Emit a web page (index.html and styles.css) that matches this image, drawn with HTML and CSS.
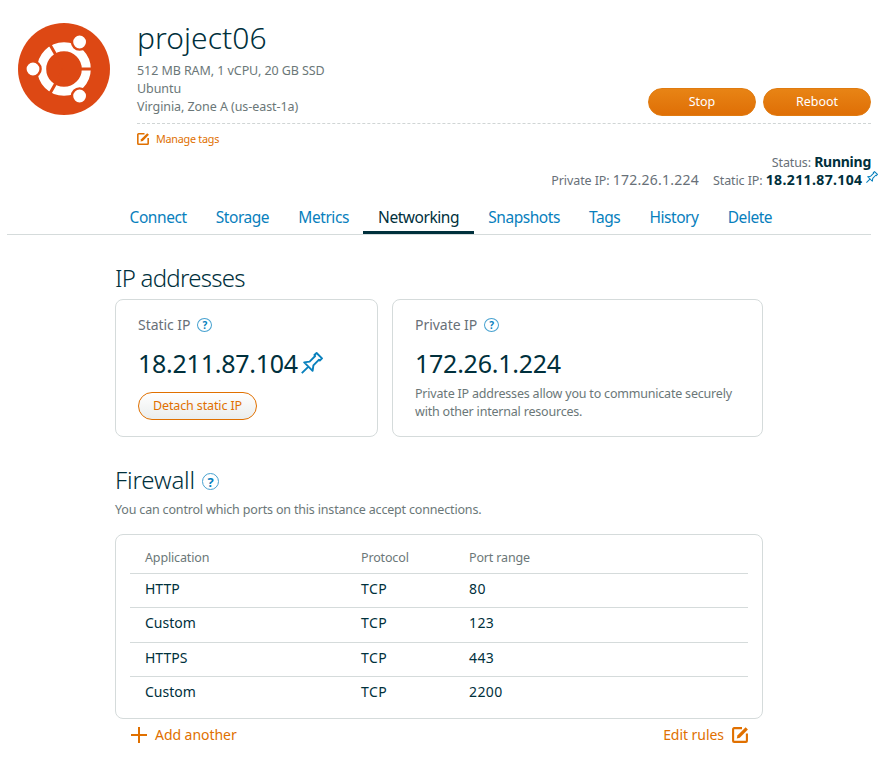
FILE: index.html
```html
<!DOCTYPE html>
<html lang="en">
<head>
<meta charset="utf-8">
<title>project06</title>
<link rel="stylesheet" href="styles.css">
</head>
<body>
<svg class="defs" aria-hidden="true">
  <symbol id="pin" viewBox="0 0 22 22"><path d="M.8 21.2 L7.2 14.8 M3.2 10.4 L8.6 9.6 L14.2 4 L13.4 3 L15.6 1 L21 6.4 L18.8 8.6 L17.8 7.8 L12.4 13.4 L11.6 18.8 Z" fill="none" stroke="currentColor" stroke-width="1.9" stroke-linejoin="round"/></symbol>
  <symbol id="edit" viewBox="0 0 16 16"><path d="M10 1.1H2.1a1 1 0 0 0-1 1v11.8a1 1 0 0 0 1 1h11.8a1 1 0 0 0 1-1V6.5" fill="none" stroke="currentColor" stroke-width="2.1"/><path d="M4.8 11.4l.6-3L13.6.2 15.9 2.4 7.8 10.8z" fill="currentColor"/></symbol>
</svg>
<main class="page">
  <header class="instance">
    <svg class="logo" viewBox="-46 -46 92 92">
      <circle r="46" fill="#dd4814"/>
      <circle r="22.3" fill="none" stroke="#fff" stroke-width="9"/>
      <path d="M0 0H30M0 0L-15 -26M0 0L-15 26" stroke="#dd4814" stroke-width="3"/>
      <g fill="#fff" stroke="#dd4814" stroke-width="2.4">
        <circle cx="-31" cy="0" r="7.6"/><circle cx="15.6" cy="-27" r="7.6"/><circle cx="15.6" cy="27" r="7.6"/>
      </g>
    </svg>
    <div class="details">
      <div class="summary">
        <div>
          <h1>project06</h1>
          <p>512 MB RAM, 1 vCPU, 20 GB SSD</p>
          <p>Ubuntu</p>
          <p>Virginia, Zone A (us-east-1a)</p>
        </div>
        <div class="actions"><button>Stop</button><button>Reboot</button></div>
      </div>
      <a class="manage"><svg><use href="#edit"/></svg>Manage tags</a>
      <div class="status">
        <div>Status: <b class="running">Running</b></div>
        <div class="ips"><span>Private IP: <span class="ip">172.26.1.224</span></span><span class="static">Static IP: <b>18.211.87.104</b><svg><use href="#pin"/></svg></span></div>
      </div>
    </div>
  </header>
  <nav class="tabs">
    <a>Connect</a><a>Storage</a><a>Metrics</a><a class="active">Networking</a><a>Snapshots</a><a>Tags</a><a>History</a><a>Delete</a>
  </nav>
  <section class="content">
    <h2>IP addresses</h2>
    <div class="cards">
      <div class="card">
        <div class="label">Static IP<span class="help">?</span></div>
        <div class="address">18.211.87.104<svg><use href="#pin"/></svg></div>
        <button class="detach">Detach static IP</button>
      </div>
      <div class="card">
        <div class="label">Private IP<span class="help">?</span></div>
        <div class="address">172.26.1.224</div>
        <p class="note">Private IP addresses allow you to communicate securely<br>with other internal resources.</p>
      </div>
    </div>
    <h2 class="firewall">Firewall<span class="help large">?</span></h2>
    <p class="intro">You can control which ports on this instance accept connections.</p>
    <div class="rules">
      <div class="row head"><span>Application</span><span>Protocol</span><span>Port range</span></div>
      <div class="row"><span>HTTP</span><span class="wide">TCP</span><span class="wide">80</span></div>
      <div class="row tall"><span>Custom</span><span class="wide">TCP</span><span class="wide">123</span></div>
      <div class="row"><span>HTTPS</span><span class="wide">TCP</span><span class="wide">443</span></div>
      <div class="row"><span>Custom</span><span class="wide">TCP</span><span class="wide">2200</span></div>
    </div>
    <div class="links">
      <a><svg class="plus" viewBox="0 0 16 16"><path d="M8 0v16M0 8h16" stroke="currentColor" stroke-width="2"/></svg>Add another</a>
      <a>Edit rules<svg class="pencil"><use href="#edit"/></svg></a>
    </div>
  </section>
</main>
</body>
</html>
```
FILE: styles.css
```css
* { box-sizing: border-box; }
body { margin: 0; background: #fff; color: #687078; font: 12.5px/18px "Noto Sans", sans-serif; }
h1, h2, p { margin: 0; font-weight: 300; color: #00303c; }
p { font-weight: 400; color: #6b7778; letter-spacing: -.07px; }
button { font: 400 12.5px/26px "Noto Sans", sans-serif; padding: 0; border-radius: 14px; height: 28px; }
svg { flex: none; }
.defs { position: absolute; width: 0; height: 0; }
.page { width: 896px; height: 761px; overflow: hidden; }

.instance { display: flex; height: 195px; padding: 15px 25px 0 18.4px; }
.logo { width: 92px; height: 92px; margin: 8.3px 26.6px 0 0; overflow: visible; }
.details { flex: 1; min-width: 0; }
.summary { display: flex; justify-content: space-between; align-items: flex-end; height: 109px; border-bottom: 1px dashed #d0d5d5; }
.summary > div:first-child { height: 109px; }
h1 { font-size: 30px; line-height: 48px; letter-spacing: .05px; }
.actions { display: flex; gap: 7px; padding-bottom: 7px; }
.actions button { width: 108px; border: 1px solid #e07b10; color: #fff; background: linear-gradient(#e88415, #df6f06); }
.manage { display: flex; align-items: center; height: 30px; font-size: 10.8px; letter-spacing: -.25px; color: #e07000; }
.manage svg { width: 12px; height: 12px; margin-right: 7px; }
.status { text-align: right; margin-top: -1px; letter-spacing: -.1px; }
.status b { color: #00303c; font-size: 14px; letter-spacing: -.25px; }
.status .static b { letter-spacing: .38px; }
.ips { display: flex; justify-content: flex-end; gap: 14px; margin-top: -1px; }
.ip { font-size: 14px; letter-spacing: .25px; }
.static { margin-right: -7px; }
.static svg { width: 12px; height: 12px; margin-left: 3.5px; vertical-align: 2px; color: #0880bd; }

.tabs { display: flex; height: 40px; margin: 0 25px 0 7px; padding-left: 108px; border-bottom: 1px solid #d5dbdb; font-size: 15.5px; line-height: 44px; letter-spacing: -.45px; color: #0880bd; }
.tabs a { padding: 0 14.6px; height: 39px; }
.tabs .active { color: #00303c; border-bottom: 3px solid #00303c; }

.content { width: 648px; margin-left: 115px; padding-top: 25px; }
h2 { font-size: 24px; line-height: 36px; letter-spacing: -.75px; }
.cards { display: flex; gap: 14px; margin-top: 3px; }
.card { width: 263px; height: 138px; padding: 16px 22px; border: 1px solid #d5dbdb; border-radius: 8px; }
.card + .card { width: 371px; }
.label { display: flex; align-items: center; font-size: 14px; height: 18px; letter-spacing: -.04px; }
.help { display: inline-flex; align-items: center; justify-content: center; width: 15px; height: 14px; margin-left: 7px; border: 1px solid #48a2d0; border-radius: 50%; color: #0880bd; font-size: 10px; line-height: 12px; font-weight: 700; letter-spacing: 0; }
.help.large { width: 17px; height: 17px; font-size: 13px; margin-top: 3px; }
.address { display: flex; font-size: 25px; line-height: 36px; letter-spacing: -.25px; color: #00303c; margin-top: 11px; }
.address svg { width: 22px; height: 22px; margin: 7px 0 0 3px; color: #0880bd; }
.detach { width: 119px; margin-top: 11px; border: 1px solid #e07000; color: #e07000; background: linear-gradient(#fff, #eaeded); letter-spacing: -.13px; }
.note { margin-top: 4px; letter-spacing: -.2px; }
.firewall { display: flex; align-items: center; margin-top: 25px; letter-spacing: -.15px; }
.intro { margin-top: 3px; letter-spacing: -.17px; }

.rules { height: 185px; margin-top: 15px; padding: 4px 14px; border: 1px solid #d5dbdb; border-radius: 8px; }
.row { display: grid; grid-template-columns: 216px 108px 1fr; height: 34px; padding-left: 15px; border-bottom: 1px solid #d5dbdb; font-size: 14px; line-height: 29px; color: #00303c; }
.row.head { height: 35px; line-height: 38px; font-size: 12.5px; letter-spacing: -.15px; color: #6b7778; }
.row.tall { height: 35px; }
.row:last-child { border: 0; }
.wide { letter-spacing: .4px; }
.links { display: flex; justify-content: space-between; padding: 0 15px 0 16px; font-size: 14px; line-height: 31px; letter-spacing: -.05px; color: #e07000; }
.links a { display: flex; align-items: center; gap: 8px; }
.links svg { width: 16px; height: 16px; }
```
